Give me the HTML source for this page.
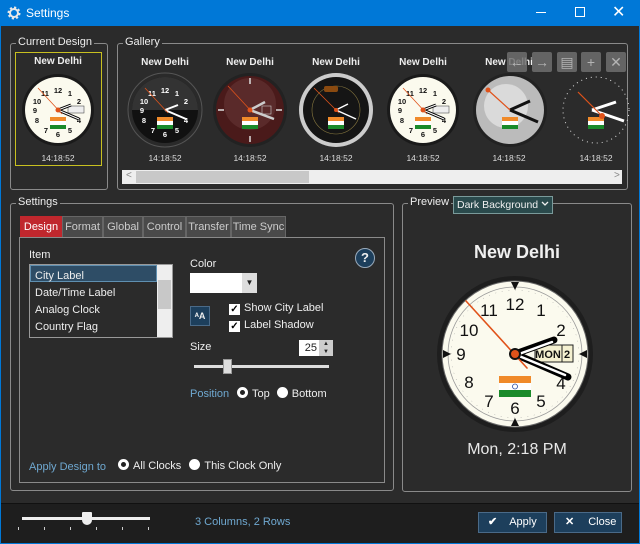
<!DOCTYPE html>
<html><head><meta charset="utf-8"><style>
*{box-sizing:border-box;margin:0;padding:0}
body{width:640px;height:544px;background:#0078d7;font-family:"Liberation Sans",sans-serif;font-size:11px;color:#eee;position:relative;overflow:hidden}
.abs{position:absolute;white-space:nowrap}
#main{position:absolute;left:1px;top:26px;width:638px;height:477px;background:#2b2b2b}
#bot{position:absolute;left:1px;top:503px;width:638px;height:40px;background:#1e1e1e;border-top:1px solid #111}
.fs{position:absolute;border:1px solid #8a8a8a;border-radius:3px}
.lg{position:absolute;top:-8px;left:5px;background:#2b2b2b;padding:0 2px;color:#eee;font-size:11px;white-space:nowrap}
.lbl{position:absolute;width:86px;text-align:center;font-weight:bold;font-size:10px;color:#eee}
.tm{position:absolute;width:86px;text-align:center;font-size:8.5px;color:#ddd}
.tab{position:absolute;top:216px;height:22px;background:#4a4a4a;border:1px solid #666;color:#ccc;font-size:11px;line-height:20px;text-align:center}
.chk{display:inline-block;width:11px;height:11px;background:#fff;color:#000;font-size:10px;line-height:11px;text-align:center;font-weight:bold;vertical-align:-1px;margin-right:4px}
.rad{display:inline-block;width:11px;height:11px;border-radius:50%;background:#fff;vertical-align:-1px;margin-right:4px}
.rad.on{border:3px solid #fff;background:#222}
.tbtn{position:absolute;top:52px;width:20px;height:20px;background:#6e6e6e;opacity:.85;border-radius:2px;color:#ccc;text-align:center;line-height:20px;font-size:14px}
.btn{position:absolute;top:512px;height:21px;background:#1d3f5c;border:1px solid #4a6a88;color:#fff;font-size:11px;line-height:19px;white-space:nowrap}
</style></head><body>
<svg class="abs" style="left:7px;top:6px" width="14" height="14" viewBox="0 0 14 14"><circle cx="7" cy="7" r="5" fill="none" stroke="#e8e8e8" stroke-width="3" stroke-dasharray="2 1.9"/><circle cx="7" cy="7" r="4" fill="none" stroke="#e8e8e8" stroke-width="2"/></svg>
<div class="abs" style="left:26px;top:6px;font-size:12px;color:#fff">Settings</div>
<div class="abs" style="left:536px;top:12px;width:10px;height:1px;background:#fff"></div>
<div class="abs" style="left:575px;top:7px;width:10px;height:10px;border:1px solid #fff"></div>
<div class="abs" style="left:612px;top:2px;font-size:16px;color:#fff">✕</div>
<div id="main"></div>
<div id="bot"></div>

<div class="fs" style="left:10px;top:43px;width:98px;height:147px"><span class="lg">Current Design</span></div>
<div class="abs" style="left:15px;top:52px;width:87px;height:114px;border:1px solid #c8c020"></div>

<div class="fs" style="left:117px;top:43px;width:511px;height:147px"><span class="lg">Gallery</span></div>
<div class="abs" style="left:122px;top:170px;width:500px;height:14px;background:#eee"></div>
<div class="abs" style="left:136px;top:171px;width:173px;height:12px;background:#c8c8c8"></div>
<div class="abs" style="left:126px;top:170px;color:#888;font-size:10px">&lt;</div>
<div class="abs" style="left:614px;top:170px;color:#888;font-size:10px">&gt;</div>

<div class="lbl" style="left:15px;top:56px">New Delhi</div>
<div class="lbl" style="left:122px;top:57px">New Delhi</div>
<div class="lbl" style="left:207px;top:57px">New Delhi</div>
<div class="lbl" style="left:293px;top:57px">New Delhi</div>
<div class="lbl" style="left:380px;top:57px">New Delhi</div>
<div class="lbl" style="left:466px;top:57px">New Delhi</div>
<div class="tm" style="left:15px;top:153px">14:18:52</div>
<div class="tm" style="left:122px;top:153px">14:18:52</div>
<div class="tm" style="left:207px;top:153px">14:18:52</div>
<div class="tm" style="left:293px;top:153px">14:18:52</div>
<div class="tm" style="left:380px;top:153px">14:18:52</div>
<div class="tm" style="left:466px;top:153px">14:18:52</div>
<div class="tm" style="left:553px;top:153px">14:18:52</div>

<svg class="abs" style="left:0;top:0" width="640" height="200">
 <defs>
  <g id="hands"><line x1="0" y1="0" x2="13" y2="-5" stroke="#000" stroke-width="3"/><line x1="0" y1="0" x2="21" y2="9" stroke="#000" stroke-width="3"/><line x1="0" y1="0" x2="13" y2="-5" stroke="#fff" stroke-width="1"/><line x1="0" y1="0" x2="21" y2="9" stroke="#fff" stroke-width="1"/><line x1="4" y1="4" x2="-20" y2="-22" stroke="#e0521a" stroke-width="0.8"/><circle r="2.5" fill="#e0521a"/></g>
  <g id="flag"><rect x="-8" y="7" width="16" height="4" fill="#f08a2a"/><rect x="-8" y="11" width="16" height="4" fill="#fff"/><rect x="-8" y="15" width="16" height="4" fill="#1a8a2a"/></g>
 </defs>
 <g transform="translate(58,110)"><circle r="36" fill="#1a1a1a"/><circle r="33" fill="#fbfaee"/>
  <g font-size="7.5" font-weight="bold" fill="#111" text-anchor="middle"><text x="0" y="-17">12</text><text x="-23" y="3">9</text><text x="0" y="27">6</text><text x="-13" y="-14">11</text><text x="12" y="-14">1</text><text x="-21" y="-6">10</text><text x="21" y="-6">2</text><text x="-21" y="13">8</text><text x="-12" y="23">7</text><text x="12" y="23">5</text><text x="21" y="13">4</text></g>
  <rect x="10" y="-4" width="16" height="7" fill="#eee" stroke="#333" stroke-width=".5"/><use href="#flag"/><use href="#hands"/></g>
 <g transform="translate(165,110)"><circle r="37" fill="#2a2a2a" stroke="#555"/><circle r="33" fill="#111"/><path d="M-33 0 A33 33 0 0 1 33 0Z" fill="#333"/>
  <g font-size="7.5" font-weight="bold" fill="#fff" text-anchor="middle"><text x="0" y="-17">12</text><text x="-23" y="3">9</text><text x="0" y="27">6</text><text x="-13" y="-14">11</text><text x="12" y="-14">1</text><text x="-21" y="-6">10</text><text x="21" y="-6">2</text><text x="-21" y="13">8</text><text x="-12" y="23">7</text><text x="12" y="23">5</text><text x="21" y="13">4</text></g>
  <use href="#flag"/><g stroke="#fff" stroke-width="2"><line x2="13" y2="-5"/><line x2="21" y2="9"/></g><line x1="3" y1="3" x2="-20" y2="-22" stroke="#e0521a" stroke-width=".8"/></g>
 <g transform="translate(250,110)"><circle r="37" fill="#222"/><circle r="34" fill="#4a1a1a"/><circle r="26" cy="-6" fill="#6a3a3a" opacity=".5"/>
  <g stroke="#ddd" stroke-width="1.5"><line y1="-32" y2="-26"/><line y1="32" y2="26"/><line x1="-32" x2="-26"/><line x1="32" x2="26"/></g>
  <use href="#flag"/><rect x="12" y="-4" width="9" height="8" fill="none" stroke="#ccc" stroke-width=".6"/><g stroke="#ccc" stroke-width="2.5"><line x2="15" y2="-8"/><line x2="24" y2="9"/></g><line x1="3" y1="3" x2="-22" y2="-24" stroke="#e0521a" stroke-width=".8"/><circle r="2.5" fill="#e0521a"/></g>
 <g transform="translate(336,110)"><circle r="37" fill="#ccc"/><circle r="33" fill="#151515"/><circle r="24" fill="none" stroke="#8a7a40" stroke-width=".6"/>
  <rect x="-12" y="-24" width="14" height="6" rx="2" fill="#8a4a10"/><use href="#flag"/><g stroke="#fff" stroke-width="1.5"><line x2="12" y2="-6"/><line x2="20" y2="9"/></g><line x1="3" y1="3" x2="-22" y2="-22" stroke="#e0521a" stroke-width=".8"/><circle r="2" fill="#e0521a"/></g>
 <g transform="translate(423,110)"><circle r="36" fill="#1a1a1a"/><circle r="33" fill="#fbfaee"/>
  <g font-size="7.5" font-weight="bold" fill="#111" text-anchor="middle"><text x="0" y="-17">12</text><text x="-23" y="3">9</text><text x="0" y="27">6</text><text x="-13" y="-14">11</text><text x="12" y="-14">1</text><text x="-21" y="-6">10</text><text x="21" y="-6">2</text><text x="-21" y="13">8</text><text x="-12" y="23">7</text><text x="12" y="23">5</text><text x="21" y="13">4</text></g>
  <rect x="10" y="-4" width="16" height="7" fill="#eee" stroke="#333" stroke-width=".5"/><use href="#flag"/><use href="#hands"/></g>
 <g transform="translate(510,110)"><circle r="37" fill="#222"/><circle r="34" fill="#bbb"/><circle r="22" cx="-4" cy="-4" fill="#eee" opacity=".6"/>
  <use href="#flag"/><g stroke="#111" stroke-width="3"><line x2="20" y2="-9"/><line x2="28" y2="12"/></g><line x2="-22" y2="-20" stroke="#e0521a" stroke-width="1.2"/><circle cx="-22" cy="-20" r="2.5" fill="#e0521a"/></g>
 <g transform="translate(596,110)"><circle r="33" fill="none" stroke="#ddd" stroke-width="1" stroke-dasharray="1 4"/>
  <use href="#flag"/><g stroke="#fff" stroke-width="3"><line x1="-4" x2="20" y2="-8"/><line x1="-4" x2="28" y2="11"/></g><line x1="6" y1="6" x2="-18" y2="-18" stroke="#e0521a" stroke-width="1.2"/><circle cx="6" cy="6" r="3" fill="#e0521a"/></g>
</svg>
<div class="tbtn" style="left:507px">←</div><div class="tbtn" style="left:532px">→</div><div class="tbtn" style="left:557px">▤</div><div class="tbtn" style="left:581px">+</div><div class="tbtn" style="left:606px">✕</div>

<div class="fs" style="left:10px;top:203px;width:384px;height:288px"><span class="lg">Settings</span></div>
<div class="tab" style="left:20px;width:42px;background:#c0272d;color:#fff;border-color:#c0272d">Design</div>
<div class="tab" style="left:62px;width:41px">Format</div>
<div class="tab" style="left:103px;width:40px">Global</div>
<div class="tab" style="left:143px;width:43px">Control</div>
<div class="tab" style="left:186px;width:45px">Transfer</div>
<div class="tab" style="left:231px;width:55px">Time Sync</div>
<div class="abs" style="left:19px;top:237px;width:366px;height:246px;border:1px solid #8a8a8a"></div>
<div class="abs" style="left:29px;top:249px">Item</div>
<div class="abs" style="left:29px;top:264px;width:144px;height:74px;border:1px solid #999;background:#2b2b2b"></div>
<div class="abs" style="left:30px;top:265px;width:127px;height:17px;background:#2e4d66;border:1px solid #5f8fb0"></div>
<div class="abs" style="left:157px;top:265px;width:15px;height:72px;background:#eee"></div>
<div class="abs" style="left:158px;top:280px;width:13px;height:29px;background:#c8c8c8"></div>
<div class="abs" style="left:35px;top:268px;line-height:17px;font-size:11px">City Label<br>Date/Time Label<br>Analog Clock<br>Country Flag</div>
<div class="abs" style="left:190px;top:258px">Color</div>
<div class="abs" style="left:190px;top:273px;width:52px;height:20px;background:#fff"></div>
<div class="abs" style="left:242px;top:273px;width:15px;height:20px;background:#ddd;color:#222;font-size:8px;text-align:center;line-height:20px">▼</div>
<div class="abs" style="left:190px;top:306px;width:20px;height:20px;background:#1d3f5c;border:1px solid #4a6a88;font-size:9px;text-align:center;line-height:18px;font-weight:bold">ᴬA</div>
<div class="abs" style="left:229px;top:302px"><span class="chk">✓</span>Show City Label</div>
<div class="abs" style="left:229px;top:319px"><span class="chk">✓</span>Label Shadow</div>
<div class="abs" style="left:355px;top:248px;width:20px;height:20px;border-radius:50%;background:#1d3f5c;border:1.5px solid #9ab;text-align:center;line-height:17px;font-weight:bold;font-size:13px">?</div>
<div class="abs" style="left:190px;top:341px">Size</div>
<div class="abs" style="left:299px;top:340px;width:20px;height:16px;background:#fff;color:#222;text-align:right;padding-right:2px;line-height:16px">25</div>
<div class="abs" style="left:319px;top:340px;width:14px;height:16px;background:#ccc;color:#222;font-size:6px;line-height:8px;text-align:center">▲<br>▼</div>
<div class="abs" style="left:194px;top:365px;width:135px;height:3px;background:#ddd"></div>
<div class="abs" style="left:223px;top:359px;width:9px;height:15px;background:#ddd;border:1px solid #999"></div>
<div class="abs" style="left:190px;top:388px;color:#6fa8d0">Position</div>
<div class="abs" style="left:237px;top:387px"><span class="rad on"></span>Top <span class="rad" style="margin-left:4px"></span>Bottom</div>
<div class="abs" style="left:29px;top:461px;color:#6fa8d0">Apply Design to</div>
<div class="abs" style="left:118px;top:459px"><span class="rad on"></span>All Clocks <span class="rad" style="margin-left:5px"></span>This Clock Only</div>

<div class="fs" style="left:402px;top:203px;width:230px;height:289px"><span class="lg">Preview</span></div>
<div class="abs" style="left:453px;top:196px;width:100px;height:18px;background:#2a4a4c;border:1px solid #7a9a9a;line-height:16px;padding-left:3px;font-size:10.5px">Dark Background</div>
<svg class="abs" style="left:541px;top:201px" width="8" height="6" viewBox="0 0 8 6"><path d="M1 1 L4 4 L7 1" fill="none" stroke="#eee" stroke-width="1.3"/></svg>
<div class="abs" style="left:402px;top:242px;width:230px;text-align:center;font-weight:bold;font-size:18px;color:#f0f0f0">New Delhi</div>
<svg class="abs" style="left:436px;top:275px" width="158" height="158" viewBox="-79 -79 158 158">
 <circle r="78" fill="#1e1e1e"/><circle r="73" fill="#fbfaee" stroke="#666"/>
 <circle r="67" fill="none" stroke="#999" stroke-width=".8"/><circle r="64" fill="none" stroke="#999" stroke-width=".5" stroke-dasharray="1 5.7"/>
 <g fill="#111"><path d="M0 -64 l-4 -8 h8z"/><path d="M0 64 l-4 8 h8z"/><path d="M-64 0 l-8 -4 v8z"/><path d="M64 0 l8 -4 v8z"/></g>
 <g font-size="17" fill="#111" text-anchor="middle"><text x="0" y="-44">12</text><text x="26" y="-38">1</text><text x="46" y="-18">2</text><text x="-46" y="-18">10</text><text x="-26" y="-38">11</text><text x="-54" y="6">9</text><text x="-46" y="34">8</text><text x="-26" y="53">7</text><text x="0" y="60">6</text><text x="26" y="53">5</text><text x="46" y="35">4</text></g>
 <rect x="20" y="-9" width="38" height="17" fill="#f4f0d0" stroke="#222"/><line x1="47" y1="-9" x2="47" y2="8" stroke="#222"/>
 <text x="33" y="4" font-size="11" text-anchor="middle" fill="#111" font-weight="bold">MON</text><text x="52" y="4" font-size="11" text-anchor="middle" fill="#111" font-weight="bold">2</text>
 <rect x="-16" y="22" width="32" height="7" fill="#f08a2a"/><rect x="-16" y="29" width="32" height="7" fill="#fff"/><rect x="-16" y="36" width="32" height="7" fill="#1a8a2a"/><circle cy="32.5" r="2.5" fill="none" stroke="#2a4aa0" stroke-width=".8"/>
 <g stroke-linecap="round"><line x1="0" y1="0" x2="39" y2="-14" stroke="#000" stroke-width="7"/><line x1="0" y1="0" x2="53" y2="23" stroke="#000" stroke-width="7"/><line x1="4" y1="0" x2="37" y2="-12" stroke="#fff" stroke-width="2.5"/><line x1="4" y1="2" x2="50" y2="21" stroke="#fff" stroke-width="2.5"/><line x1="12" y1="14" x2="-49" y2="-53" stroke="#e0521a" stroke-width="1.6"/></g>
 <circle r="6" fill="#111"/><circle r="4" fill="#e0521a"/>
</svg>
<div class="abs" style="left:402px;top:441px;width:230px;text-align:center;font-size:16px;color:#e8e8e8">Mon, 2:18 PM</div>

<div class="abs" style="left:22px;top:517px;width:128px;height:3px;background:#eee"></div>
<div class="abs" style="left:82px;top:512px;width:10px;height:13px;background:#eee;border-radius:1px 1px 5px 5px"></div>
<div class="abs" style="left:18px;top:527px;width:135px;height:3px;background:repeating-linear-gradient(90deg,#ccc 0 1px,transparent 1px 26px)"></div>
<div class="abs" style="left:195px;top:516px;color:#6fa8d0;font-size:11px">3 Columns, 2 Rows</div>
<div class="btn" style="left:478px;width:69px"><span style="margin-left:9px;font-weight:bold">✔</span><span style="margin-left:12px">Apply</span></div>
<div class="btn" style="left:554px;width:68px"><span style="margin-left:10px;font-weight:bold">✕</span><span style="margin-left:14px">Close</span></div>
</body></html>
